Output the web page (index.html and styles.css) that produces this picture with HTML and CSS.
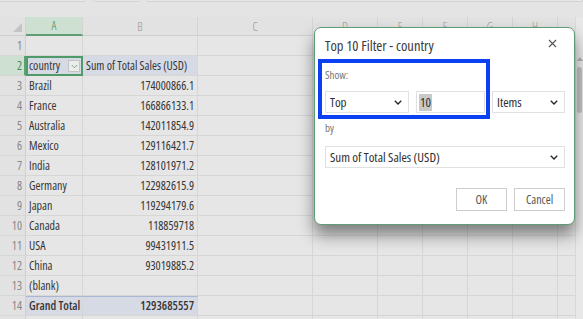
FILE: index.html
```html
<!DOCTYPE html>
<html>
<head>
<meta charset="utf-8">
<link rel="stylesheet" href="styles.css">
</head>
<body>
<div class="app">
  <div class="topbar">
    <div class="tb-box tb-name"></div>
    <div class="tb-box tb-fx"></div>
    <div class="tb-box tb-formula"></div>
  </div>
  <div class="main">
    <div class="sheet">
      <div class="hd corner"><span class="tri"></span></div>
      <div class="hd sel">A</div>
      <div class="hd">B</div>
      <div class="hd">C</div>
      <div class="hd">D</div>
      <div class="hd">E</div>
      <div class="hd">F</div>
      <div class="hd">G</div>
      <div class="hd">H</div>
      <div class="hd last"></div>

      <div class="rn">1</div><div class="c"></div><div class="c"></div><div class="c"></div><div class="c"></div><div class="c"></div><div class="c"></div><div class="c"></div><div class="c"></div><div class="c last"></div>

      <div class="rn sel">2</div>
      <div class="c ph active">country<span class="fbtn"><svg width="7" height="5" viewBox="0 0 7 5"><path d="M0.8 1 L3.5 3.8 L6.2 1" fill="none" stroke="#7aa88a" stroke-width="1"/></svg></span></div>
      <div class="c ph">Sum of Total Sales (USD)</div>
      <div class="c"></div><div class="c"></div><div class="c"></div><div class="c"></div><div class="c"></div><div class="c"></div><div class="c last"></div>

      <div class="rn">3</div><div class="c">Brazil</div><div class="c num">174000866.1</div><div class="c"></div><div class="c"></div><div class="c"></div><div class="c"></div><div class="c"></div><div class="c"></div><div class="c last"></div>
      <div class="rn">4</div><div class="c">France</div><div class="c num">166866133.1</div><div class="c"></div><div class="c"></div><div class="c"></div><div class="c"></div><div class="c"></div><div class="c"></div><div class="c last"></div>
      <div class="rn">5</div><div class="c">Australia</div><div class="c num">142011854.9</div><div class="c"></div><div class="c"></div><div class="c"></div><div class="c"></div><div class="c"></div><div class="c"></div><div class="c last"></div>
      <div class="rn">6</div><div class="c">Mexico</div><div class="c num">129116421.7</div><div class="c"></div><div class="c"></div><div class="c"></div><div class="c"></div><div class="c"></div><div class="c"></div><div class="c last"></div>
      <div class="rn">7</div><div class="c">India</div><div class="c num">128101971.2</div><div class="c"></div><div class="c"></div><div class="c"></div><div class="c"></div><div class="c"></div><div class="c"></div><div class="c last"></div>
      <div class="rn">8</div><div class="c">Germany</div><div class="c num">122982615.9</div><div class="c"></div><div class="c"></div><div class="c"></div><div class="c"></div><div class="c"></div><div class="c"></div><div class="c last"></div>
      <div class="rn">9</div><div class="c">Japan</div><div class="c num">119294179.6</div><div class="c"></div><div class="c"></div><div class="c"></div><div class="c"></div><div class="c"></div><div class="c"></div><div class="c last"></div>
      <div class="rn">10</div><div class="c">Canada</div><div class="c num">118859718</div><div class="c"></div><div class="c"></div><div class="c"></div><div class="c"></div><div class="c"></div><div class="c"></div><div class="c last"></div>
      <div class="rn">11</div><div class="c">USA</div><div class="c num">99431911.5</div><div class="c"></div><div class="c"></div><div class="c"></div><div class="c"></div><div class="c"></div><div class="c"></div><div class="c last"></div>
      <div class="rn">12</div><div class="c">China</div><div class="c num">93019885.2</div><div class="c"></div><div class="c"></div><div class="c"></div><div class="c"></div><div class="c"></div><div class="c"></div><div class="c last"></div>
      <div class="rn">13</div><div class="c">(blank)</div><div class="c num"></div><div class="c"></div><div class="c"></div><div class="c"></div><div class="c"></div><div class="c"></div><div class="c"></div><div class="c last"></div>
      <div class="rn">14</div><div class="c gt">Grand Total</div><div class="c gt num">1293685557</div><div class="c"></div><div class="c"></div><div class="c"></div><div class="c"></div><div class="c"></div><div class="c"></div><div class="c last"></div>
      <div class="rn"></div><div class="c"></div><div class="c"></div><div class="c"></div><div class="c"></div><div class="c"></div><div class="c"></div><div class="c"></div><div class="c"></div><div class="c last"></div>
    </div>
    <div class="vscroll">
      <div class="up"></div>
      <div class="thumb"></div>
    </div>
  </div>

  <div class="dialog">
    <div class="dlg-head">
      <span class="dlg-title">Top 10 Filter - country</span>
      <svg class="close" width="9" height="9" viewBox="0 0 9 9"><path d="M1 1 L8 8 M8 1 L1 8" stroke="#555" stroke-width="1.1" fill="none"/></svg>
    </div>
    <div class="lbl show">Show:</div>
    <div class="ctrl-row">
      <div class="sel-box w-top"><span>Top</span><svg class="chev" width="8" height="5" viewBox="0 0 8 5"><path d="M0.8 0.8 L4 4 L7.2 0.8" fill="none" stroke="#222" stroke-width="1.3"/></svg></div>
      <div class="sel-box w-num"><span class="hl">10</span></div>
      <div class="sel-box w-items"><span>Items</span><svg class="chev" width="8" height="5" viewBox="0 0 8 5"><path d="M0.8 0.8 L4 4 L7.2 0.8" fill="none" stroke="#222" stroke-width="1.3"/></svg></div>
    </div>
    <div class="lbl by">by</div>
    <div class="sel-box w-full"><span>Sum of Total Sales (USD)</span><svg class="chev" width="8" height="5" viewBox="0 0 8 5"><path d="M0.8 0.8 L4 4 L7.2 0.8" fill="none" stroke="#222" stroke-width="1.3"/></svg></div>
    <div class="btn-row">
      <div class="btn">OK</div>
      <div class="btn">Cancel</div>
    </div>
    <div class="annot"></div>
  </div>
</div>
</body>
</html>
```

FILE: styles.css
```css
* { box-sizing: border-box; }
html, body { margin: 0; padding: 0; }
body {
  width: 583px;
  height: 319px;
  overflow: hidden;
  background: #e4e4e4;
  font-family: "Open Sans", "Roboto Condensed", "DejaVu Sans Condensed", sans-serif;
  font-stretch: 78%;
}
.app { position: relative; width: 583px; height: 319px; overflow: hidden; }

.topbar {
  height: 17px;
  display: flex;
  gap: 7px;
  align-items: flex-start;
}
.tb-box {
  height: 2px;
  border: 1px solid #d2d2d2;
  border-top: none;
  border-radius: 0 0 4px 4px;
  background: #e8e8e8;
}
.tb-name { width: 88px; margin-left: -2px; }
.tb-fx { width: 46px; }
.tb-formula { flex: 1; }

.main { display: flex; }
.sheet {
  display: grid;
  grid-template-columns: 26px 57px 115px 115px 65px 45px 45px 45px 45px 17px;
  grid-template-rows: 19px repeat(15, 20px);
  width: 575px;
  font-size: 12px;
  color: #363636;
}
.vscroll {
  width: 8px;
  background: #e8e8e8;
  border-left: 1px solid #d8d8d8;
}
.vscroll .up {
  margin: 40px auto 0;
  width: 0; height: 0;
  border-left: 3px solid transparent;
  border-right: 3px solid transparent;
  border-bottom: 4px solid #b0b0b0;
}
.vscroll .thumb {
  margin: 6px auto 0;
  width: 5px;
  height: 46px;
  border-radius: 3px;
  background: #c2c2c2;
}

.hd {
  background: #e2e2e2;
  border-right: 1px solid #d3d3d3;
  border-bottom: 1px solid #cfcfcf;
  color: #959595;
  font-size: 12px;
  font-weight: 300;
  display: flex;
  align-items: center;
  justify-content: center;
}
.hd.sel {
  background: #cde0d2;
  color: #4a8a5e;
  border-bottom: 2px solid #5e9f74;
}
.hd.corner { position: relative; }
.hd.corner .tri {
  position: absolute;
  right: 3px; bottom: 3px;
  width: 0; height: 0;
  border-left: 9px solid transparent;
  border-bottom: 9px solid #c4c4c4;
}
.hd.last, .c.last { border-right: none; }

.rn {
  background: #e2e2e2;
  border-right: 1px solid #cfcfcf;
  border-bottom: 1px solid #d6d6d6;
  color: #888;
  font-size: 12px;
  text-align: right;
  padding-right: 3px;
  line-height: 19px;
}
.rn.sel {
  background: #cde0d2;
  color: #4a8a5e;
  border-right: 2px solid #5e9f74;
  padding-right: 2px;
}
.c {
  background: #e6e6e6;
  border-right: 1px solid #d6d6d6;
  border-bottom: 1px solid #d6d6d6;
  padding: 0 3px;
  line-height: 19px;
  white-space: nowrap;
  overflow: hidden;
}
.c.num { text-align: right; }
.c.ph { background: #d6dae5; }
.c.active {
  border: 2px solid #4f9a69;
  line-height: 16px;
  padding-left: 1px;
  position: relative;
  overflow: visible;
}
.fbtn {
  position: absolute;
  right: 1px; top: 2px;
  width: 12px; height: 12px;
  border: 1px solid #c4c4c4;
  background: #ececec;
  display: flex;
  align-items: center;
  justify-content: center;
}
.c.gt {
  background: #d6dae5;
  border-top: 1px solid #aab6d2;
  font-weight: 600;
  line-height: 18px;
}

.dialog {
  position: absolute;
  left: 314px;
  top: 27px;
  width: 261px;
  height: 198px;
  background: #fff;
  border: 1px solid #5c9d76;
  border-radius: 7px;
  box-shadow: 0 10px 16px rgba(0,0,0,0.45);
  padding: 0 9px 0 10px;
  color: #333;
}
.dlg-head {
  height: 31px;
  display: flex;
  align-items: center;
  justify-content: space-between;
  padding-top: 4px;
}
.dlg-title { font-size: 14.5px; color: #3a3a3a; font-stretch: 75%; }
.close { margin-right: 8px; margin-top: -4px; }
.lbl { font-size: 11px; color: #777; }
.lbl.show { height: 32px; line-height: 32px; }
.ctrl-row { display: flex; gap: 7px; }
.sel-box {
  height: 22px;
  border: 1px solid #e1e1e1;
  background: #fff;
  display: flex;
  align-items: center;
  justify-content: space-between;
  padding: 0 6px 0 4px;
  font-size: 13px;
  font-stretch: 75%;
  color: #2e2e2e;
}
.w-top { width: 84px; }
.w-num { width: 69px; justify-content: flex-start; padding-left: 2px; }
.w-items { width: 73px; }
.w-full { width: 240px; height: 22px; }
.hl { background: #c9c9c9; padding: 0 1px; line-height: 17px; }
.lbl.by { height: 33px; line-height: 18px; padding-top: 6px; }
.btn-row {
  display: flex;
  justify-content: flex-end;
  gap: 7px;
  margin-top: 20px;
}
.btn {
  width: 51px;
  height: 23px;
  border: 1px solid #cdcdcd;
  background: #fff;
  font-size: 12px;
  color: #555;
  display: flex;
  align-items: center;
  justify-content: center;
}

.annot {
  position: absolute;
  left: 3px;
  top: 31px;
  width: 172px;
  height: 60px;
  border: 4px solid #0a3ff2;
}
```
